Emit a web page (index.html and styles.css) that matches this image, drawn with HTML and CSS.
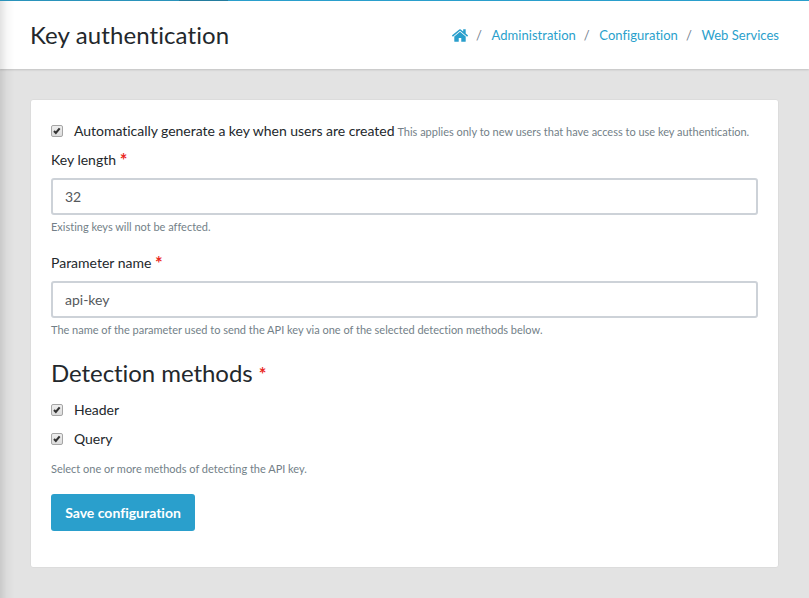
FILE: index.html
```
<!DOCTYPE html>
<html lang="en">
<head>
    <meta charset="UTF-8">
    <meta name="viewport" content="width=device-width, initial-scale=1.0">
    <title>Key authentication</title>
    <link rel="stylesheet" href="styles.css">
</head>
<body>
    <header class="page-header">
        <h1>Key authentication</h1>
        <nav class="breadcrumb">
            <a href="#" class="home" aria-label="Home">
                <svg width="16" height="13" viewBox="89 253 1614 1283">
                    <path d="M1472 992v480q0 26-19 45t-45 19h-384v-384h-256v384h-384q-26 0-45-19t-19-45v-480q0-1 .5-3t.5-3l575-474 575 474q1 2 1 6zm223-69l-62 74q-8 9-21 11h-3q-13 0-21-7l-692-577-692 577q-12 8-24 7-13-2-21-11l-62-74q-8-10-7-23.5t11-21.5l719-599q32-26 76-26t76 26l244 204v-195q0-14 9-23t23-9h192q14 0 23 9t9 23v408l219 182q10 8 11 21.5t-7 23.5z"/>
                </svg>
            </a>
            <span class="separator">/</span>
            <a href="#">Administration</a>
            <span class="separator">/</span>
            <a href="#">Configuration</a>
            <span class="separator">/</span>
            <a href="#">Web Services</a>
        </nav>
    </header>

    <form class="card">
        <div class="form-check">
            <label class="check">
                <input type="checkbox" checked>
                <svg class="box" width="12" height="12" viewBox="0 0 12 12"><path d="M2.4 6.1 4.6 8.4 9.2 2.8"/></svg>
                Automatically generate a key when users are created
            </label>
            <small>This applies only to new users that have access to use key authentication.</small>
        </div>

        <div class="form-group">
            <label for="keyLength">Key length <span class="required">*</span></label>
            <input type="text" id="keyLength" class="form-control" value="32">
            <small>Existing keys will not be affected.</small>
        </div>

        <div class="form-group">
            <label for="paramName">Parameter name <span class="required">*</span></label>
            <input type="text" id="paramName" class="form-control" value="api-key">
            <small>The name of the parameter used to send the API key via one of the selected detection methods below.</small>
        </div>

        <fieldset>
            <legend>Detection methods <span class="required">*</span></legend>
            <div class="form-check">
                <label class="check">
                    <input type="checkbox" checked>
                    <svg class="box" width="12" height="12" viewBox="0 0 12 12"><path d="M2.4 6.1 4.6 8.4 9.2 2.8"/></svg>
                    Header
                </label>
            </div>
            <div class="form-check">
                <label class="check">
                    <input type="checkbox" checked>
                    <svg class="box" width="12" height="12" viewBox="0 0 12 12"><path d="M2.4 6.1 4.6 8.4 9.2 2.8"/></svg>
                    Query
                </label>
            </div>
            <small>Select one or more methods of detecting the API key.</small>
        </fieldset>

        <button type="button">Save configuration</button>
    </form>
</body>
</html>
```
FILE: styles.css
```
* {
    box-sizing: border-box;
}

body {
    margin: 0;
    min-height: 598px;
    font-family: Lato, sans-serif;
    font-size: 14px;
    font-variant-ligatures: none;
    line-height: 21px;
    color: #23282c;
    background: #e3e3e3;
    overflow: hidden;
}

/* shadow cast by the sidebar */
body::after {
    content: "";
    position: fixed;
    top: 1px;
    bottom: 0;
    left: 0;
    width: 14px;
    background: linear-gradient(90deg, rgba(0, 0, 0, 0.11), rgba(0, 0, 0, 0.03) 50%, rgba(0, 0, 0, 0));
    pointer-events: none;
}

a {
    color: #2a9fcc;
    text-decoration: none;
}

small {
    font-size: 11px;
    letter-spacing: -0.01px;
    color: #737f88;
}

.page-header {
    display: flex;
    justify-content: space-between;
    align-items: center;
    height: 69px;
    padding: 0 30px;
    background: #fff;
    border-top: 1px solid #2a9fcc;
    border-image: linear-gradient(90deg, #2a93bb 180px, #237c9e 180px, #237c9e 228px, #2a9fcc 228px) 1;
    box-shadow: 0 1px 2px rgba(0, 0, 0, 0.15);
}

h1 {
    margin: 0;
    font-size: 24px;
    font-weight: 400;
    letter-spacing: 0.1px;
    line-height: 30px;
}

.breadcrumb {
    display: flex;
    align-items: center;
    font-size: 13px;
}

.breadcrumb a {
    letter-spacing: 0.03px;
}

.home {
    display: flex;
}

.home svg {
    fill: #2a9fcc;
}

.separator {
    width: 23.5px;
    padding-left: 8px;
    color: #73818f;
}

.card {
    margin: 30px 30px 0;
    padding: 20px;
    height: 469px;
    background: #fff;
    border: 1px solid #dcdcdc;
    border-radius: 3px;
}

.form-check {
    display: flex;
    align-items: center;
    gap: 3px;
    height: 21px;
    margin-bottom: 8px;
    white-space: nowrap;
}

.form-check small {
    padding-top: 1px;
}

.check {
    display: flex;
    align-items: center;
    letter-spacing: -0.03px;
}

.check input {
    position: absolute;
    opacity: 0;
}

.box {
    margin-right: 11px;
    background: linear-gradient(#eee, #dcdcdc);
    border: 1px solid #a5a5a5;
    border-radius: 2px;
    overflow: visible;
}

.box path {
    fill: none;
    stroke: #333;
    stroke-width: 2.5;
}

.form-group {
    height: 103px;
}

.form-group label {
    display: block;
    height: 21px;
    margin-bottom: 8px;
}

.required {
    color: #ea2a1f;
    font-size: 18px;
    font-weight: 700;
    line-height: 1;
    vertical-align: -2px;
}

.form-control {
    display: block;
    width: 100%;
    height: 37px;
    padding: 0 12px;
    font: inherit;
    color: #55595c;
    background: #fff;
    border: 2px solid #cdd2d8;
    border-radius: 3px;
}

.form-group small {
    display: block;
    margin-top: 1px;
}

fieldset {
    margin: 0 0 15px;
    padding: 2px 0 0;
    border: 0;
}

legend {
    padding: 3px 0 0;
    margin-bottom: 9px;
    font-size: 24px;
    letter-spacing: -0.06px;
    line-height: 30px;
}

legend .required {
    vertical-align: 1px;
}

fieldset small {
    display: block;
    padding-top: 1px;
}

button {
    width: 144px;
    height: 37px;
    padding: 0;
    font: inherit;
    font-weight: 700;
    color: #fff;
    background: #2a9fcc;
    border: 0;
    border-radius: 3px;
}
```
